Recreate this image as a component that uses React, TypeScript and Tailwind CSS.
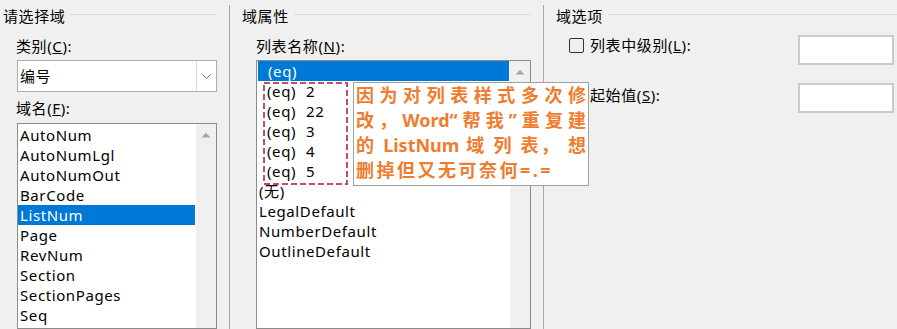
import React from 'react'

const leftItems = [
  'AutoNum',
  'AutoNumLgl',
  'AutoNumOut',
  'BarCode',
  'ListNum',
  'Page',
  'RevNum',
  'Section',
  'SectionPages',
  'Seq',
]

const listNames = [
  { text: '(eq)', num: '', selected: true },
  { text: '(eq)', num: '2' },
  { text: '(eq)', num: '22' },
  { text: '(eq)', num: '3' },
  { text: '(eq)', num: '4' },
  { text: '(eq)', num: '5' },
  { text: '(无)', num: '' },
  { text: 'LegalDefault', num: '' },
  { text: 'NumberDefault', num: '' },
  { text: 'OutlineDefault', num: '' },
]

function UpArrow() {
  return (
    <svg width="10" height="6" viewBox="0 0 10 6">
      <path d="M0.5 5.5 L5 0.8 L9.5 5.5 Z" fill="#a6a6a6" />
    </svg>
  )
}

function GroupTitle({ title, pad }: { title: string; pad: string }) {
  return (
    <div className={`h-[31px] shrink-0 flex items-center ${pad}`}>
      <span>{title}</span>
      <div className="flex-1 h-px bg-[#dcdcdc] ml-[5px] mb-[2px]" />
    </div>
  )
}

export default function App() {
  return (
    <div
      className="relative w-[897px] h-[329px] overflow-hidden bg-[#f0f0f0] flex text-[15px] tracking-[0.6px] text-black leading-[20px]"
      style={{ fontFamily: '"Noto Sans", "Noto Sans CJK SC", sans-serif' }}
    >
      {/* 请选择域 */}
      <div className="w-[229px] flex flex-col">
        <GroupTitle title="请选择域" pad="pl-[3px] pr-[12px]" />
        <div className="h-[29px] shrink-0 flex items-center pl-[16px]">
          <span>类别(<span className="underline">C</span>):</span>
        </div>
        <div className="ml-[17px] w-[200px] h-[32px] shrink-0 border border-[#adadad] bg-white flex">
          <div className="flex-1 flex items-center pl-[2px]">编号</div>
          <div className="w-[20px] border-l border-[#dadada] flex items-center justify-center">
            <svg width="9" height="5" viewBox="0 0 9 5">
              <path d="M0.5 0.5 L4.5 4.5 L8.5 0.5" fill="none" stroke="#6d6d6d" strokeWidth="1" />
            </svg>
          </div>
        </div>
        <div className="h-[31px] shrink-0 flex items-center pl-[16px]">
          <span>域名(<span className="underline">F</span>):</span>
        </div>
        <div className="ml-[17px] w-[200px] flex-1 min-h-0 overflow-hidden border border-[#8c8c8c] bg-white flex">
          <div className="flex-1 pt-[1px] pr-[1px]">
            {leftItems.map((item) => (
              <div
                key={item}
                className={`h-[20px] flex items-center pl-[2px] ${
                  item === 'ListNum' ? 'bg-[#0078d7] text-white' : ''
                }`}
              >
                {item}
              </div>
            ))}
          </div>
          <div className="w-[20px] bg-[#f0f0f0] flex justify-center pt-[8px]">
            <UpArrow />
          </div>
        </div>
      </div>

      <div className="w-px bg-[#a8a8a8] mt-[5px]" />

      {/* 域属性 */}
      <div className="w-[313px] flex flex-col">
        <GroupTitle title="域属性" pad="pl-[12px] pr-[12px]" />
        <div className="h-[29px] shrink-0 flex items-center pl-[26px]">
          <span>列表名称(<span className="underline">N</span>):</span>
        </div>
        <div className="ml-[26px] w-[275px] flex-1 min-h-0 overflow-hidden border border-[#8c8c8c] bg-white flex">
          <div className="flex-1 pl-[1px] pr-[1px]">
            {listNames.map((item, i) => (
              <div
                key={i}
                className={`h-[20px] flex items-center ${
                  item.selected
                    ? 'bg-[#0078d7] text-white pl-[10px]'
                    : item.text === '(eq)'
                      ? 'pl-[9px]'
                      : 'pl-[1px]'
                }`}
              >
                <span>{item.text}</span>
                {item.num && <span className="ml-[10px]">{item.num}</span>}
              </div>
            ))}
          </div>
          <div className="w-[20px] bg-[#f0f0f0] flex justify-center pt-[8px]">
            <UpArrow />
          </div>
        </div>
      </div>

      <div className="w-px bg-[#a8a8a8] mt-[5px]" />

      {/* 域选项 */}
      <div className="flex-1 flex flex-col">
        <GroupTitle title="域选项" pad="pl-[12px]" />
        <div className="mt-[4px] flex items-start justify-between pl-[25px] pr-[3px]">
          <div className="h-[20px] flex items-center">
            <div className="w-[15px] h-[15px] rounded-[2px] border border-[#333333]" />
            <span className="ml-[6px]">
              列表中级别(<span className="underline">L</span>):
            </span>
          </div>
          <div className="w-[96px] h-[30px] bg-white border-2 border-[#cbcbcb]" />
        </div>
        <div className="mt-[18px] flex items-start justify-between pl-[46px] pr-[3px]">
          <div className="h-[20px] mt-[2px] flex items-center">
            <span>起始值(<span className="underline">S</span>):</span>
          </div>
          <div className="w-[96px] h-[30px] bg-white border-2 border-[#cbcbcb]" />
        </div>
      </div>

      {/* 虚线框 */}
      <svg className="absolute left-[263px] top-[82px]" width="85" height="103" viewBox="0 0 85 103">
        <rect x="1" y="1" width="83" height="101" fill="none" stroke="#c0506a" strokeWidth="2" strokeDasharray="6 3" />
      </svg>

      {/* 批注 */}
      <div className="absolute left-[353px] top-[82px] w-[236px] h-[104px] bg-white border border-[#a0a0a0] pl-[2px] pr-[2px] text-[18px] tracking-normal leading-[25px] font-bold text-[#ee7d2f]">
        <div className="[text-align-last:justify]">因为对列表样式多次修</div>
        <div className="[text-align-last:justify]">改，Word“帮我”重复建</div>
        <div className="[text-align-last:justify]">的 ListNum 域 列 表， 想</div>
        <div className="tracking-[2.5px]">删掉但又无可奈何=.=</div>
      </div>
    </div>
  )
}
